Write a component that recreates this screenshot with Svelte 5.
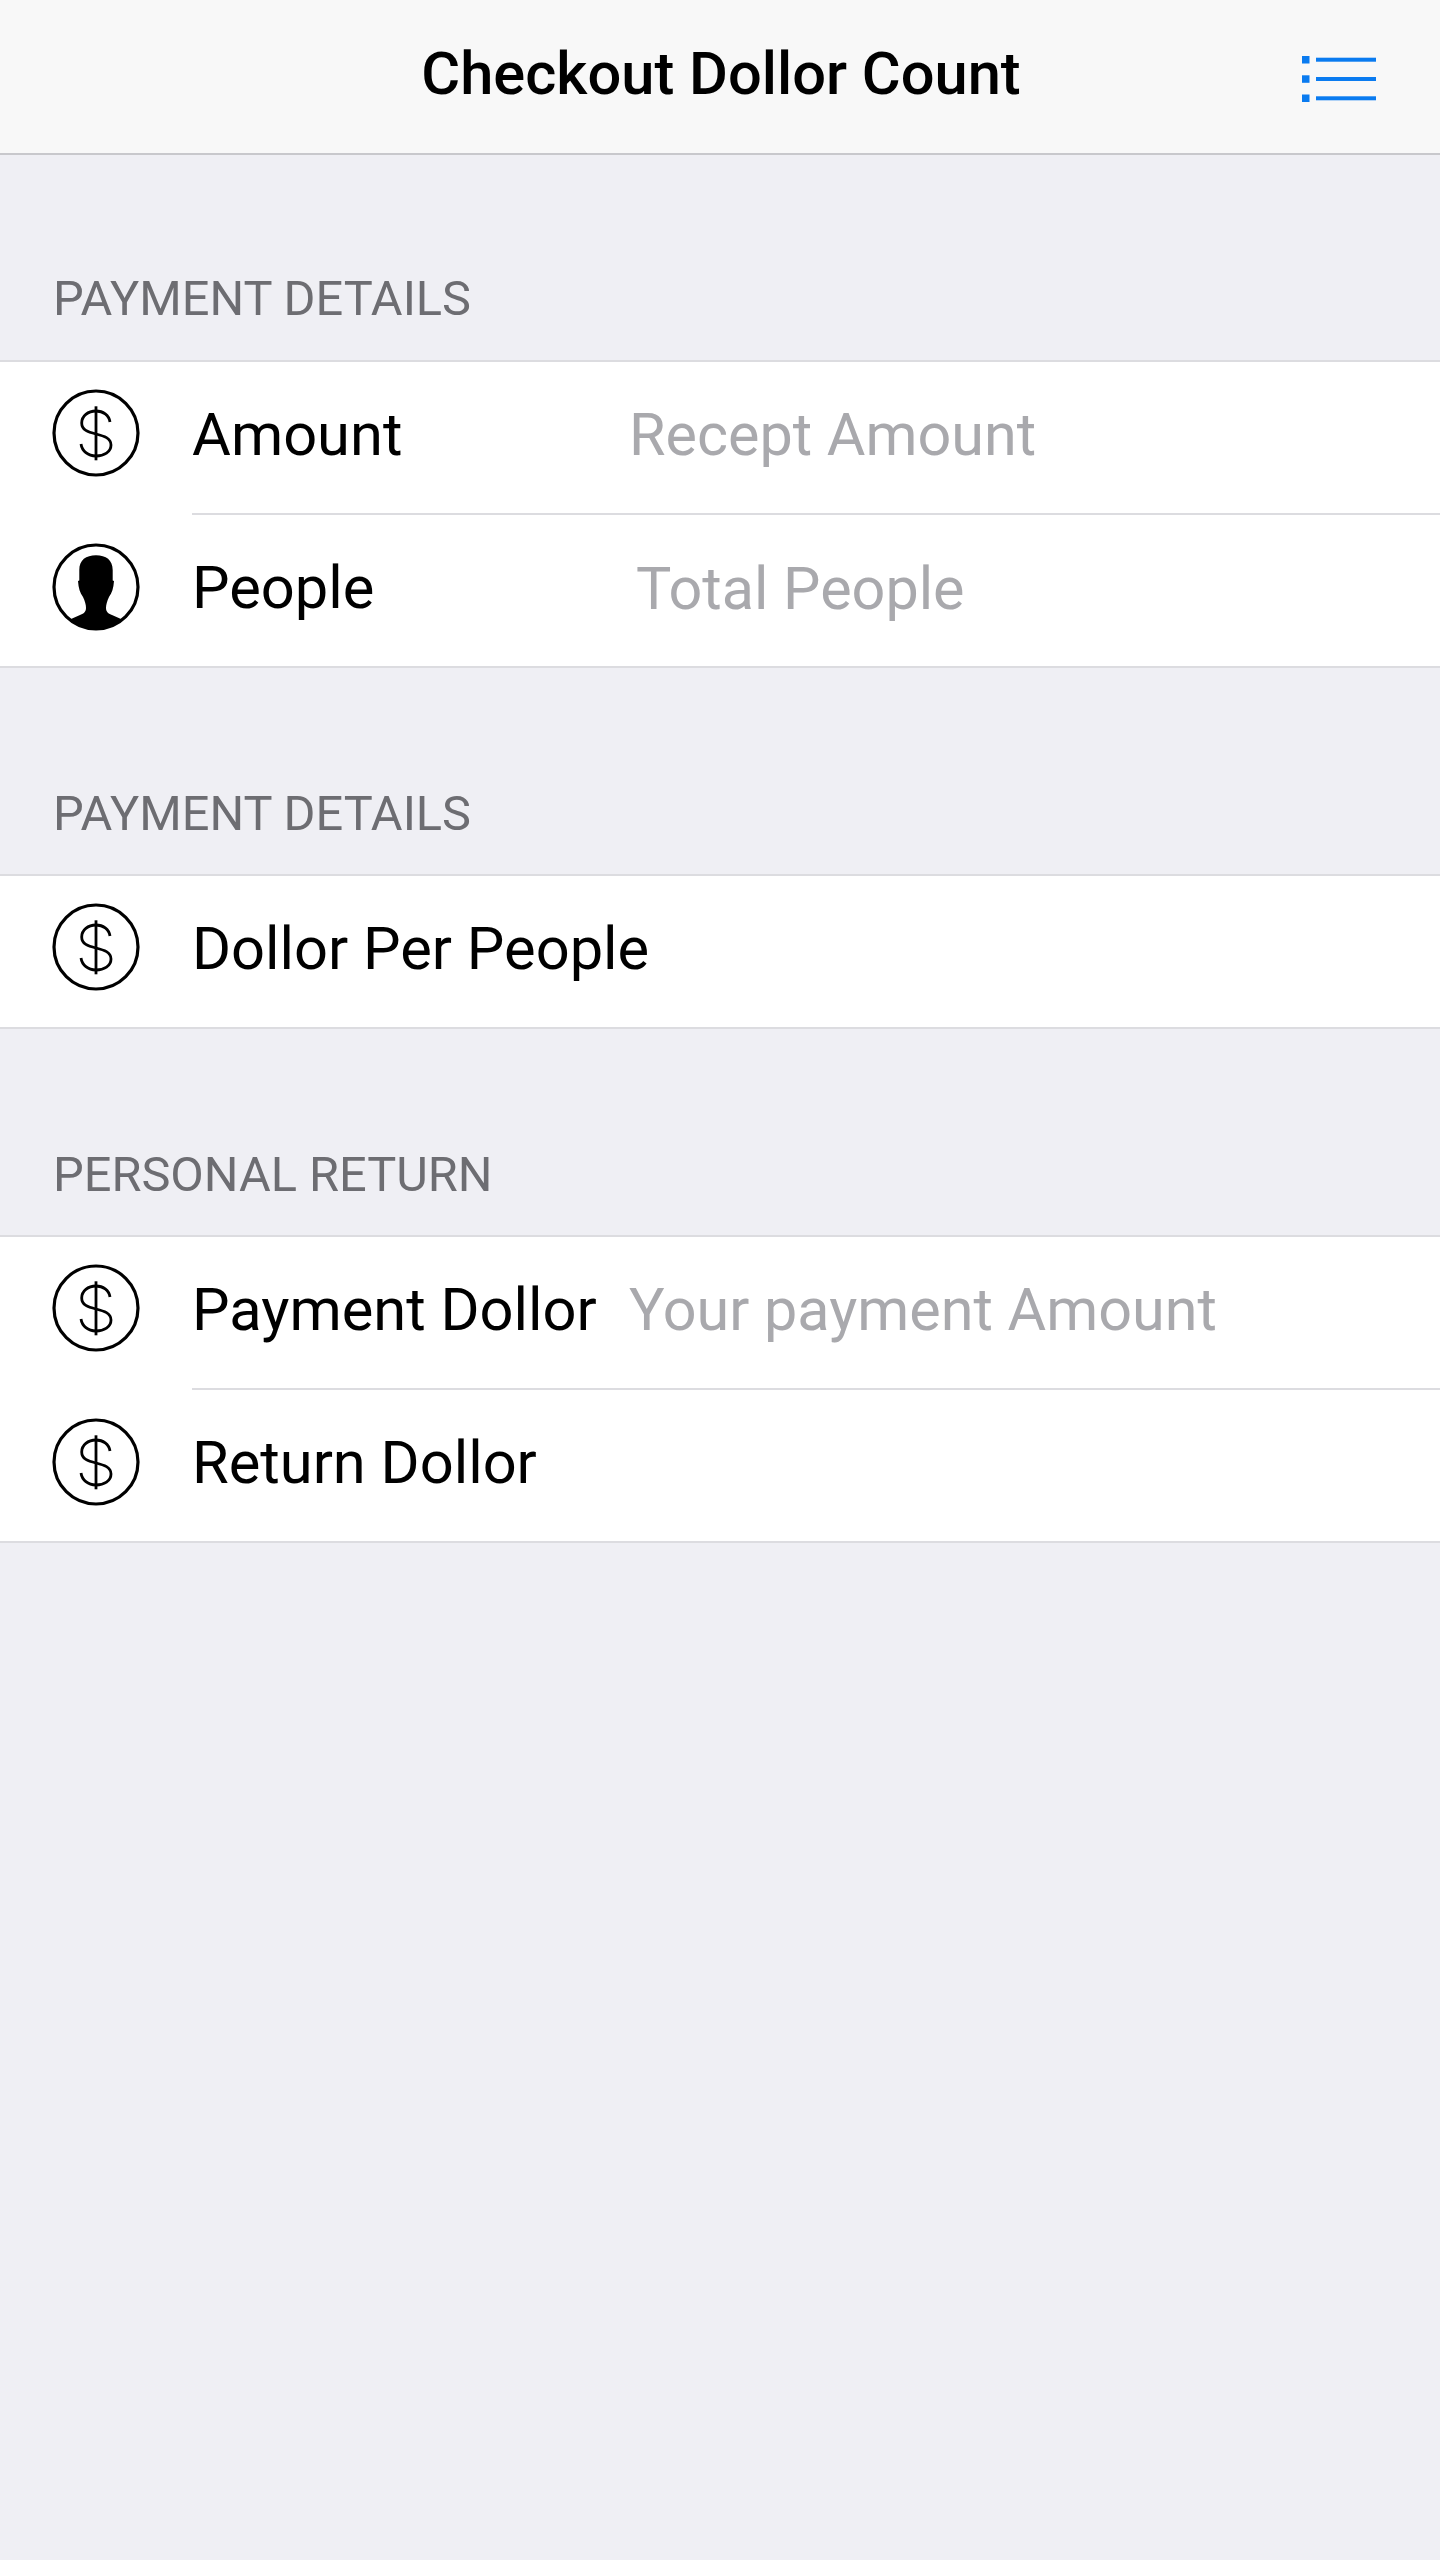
<script>
  const sections = [
    {
      title: 'PAYMENT DETAILS',
      rows: [
        { icon: 'dollar', label: 'Amount', placeholder: 'Recept Amount' },
        { icon: 'person', label: 'People', placeholder: 'Total People', nudge: true }
      ]
    },
    {
      title: 'PAYMENT DETAILS',
      rows: [{ icon: 'dollar', label: 'Dollor Per People' }]
    },
    {
      title: 'PERSONAL RETURN',
      rows: [
        { icon: 'dollar', label: 'Payment Dollor', placeholder: 'Your payment Amount' },
        { icon: 'dollar', label: 'Return Dollor' }
      ]
    }
  ];
</script>

<div class="page">
  <header class="nav">
    <h1>Checkout Dollor Count</h1>
    <button class="menu" aria-label="Menu">
      <svg width="74" height="46" viewBox="0 0 74 46" fill="#0a7bf0">
        <rect x="0" y="0" width="7.5" height="7.5" />
        <rect x="0" y="19.3" width="7.5" height="7.5" />
        <rect x="0" y="38.5" width="7.5" height="7.5" />
        <rect x="14" y="1.7" width="60" height="4" />
        <rect x="14" y="21" width="60" height="4" />
        <rect x="14" y="40.3" width="60" height="4" />
      </svg>
    </button>
  </header>

  {#each sections as section}
    <section class="section">
      <h2>{section.title}</h2>
      <div class="group">
        {#each section.rows as row}
          <div class="row">
            <svg class="icon" width="88" height="88" viewBox="0 0 88 88">
              {#if row.icon === 'dollar'}
                <circle cx="44" cy="44" r="42" fill="none" stroke="#000" stroke-width="3.2" />
                <path d="M58 33C57 26 51 22 44 22C36 22 29.7 27 29.7 34C29.7 41 36 43 44 45C52 47 59 49 59 56C59 63 52 67 44 67C36 67 30 62 29 55" fill="none" stroke="#000" stroke-width="2.8" />
                <path d="M44 17.3V71.3" fill="none" stroke="#000" stroke-width="2.8" />
              {:else}
                <clipPath id="head-clip"><circle cx="44" cy="44" r="42" /></clipPath>
                <path clip-path="url(#head-clip)" d="M44 12.3C54 12.3 60.7 17 60.7 27L60.7 37.5L62 38C61.5 45 60 50 57 54C55 58 54 62 54 65C54 69 57 71 60 72L69 76L69 90L19 90L19 76L28 72C31 71 34 69 34 65C34 62 33 58 31 54C28 50 26.5 45 26 38L27.3 37.5L27.3 27C27.3 17 34 12.3 44 12.3Z" fill="#000" />
                <circle cx="44" cy="44" r="42" fill="none" stroke="#000" stroke-width="3.2" />
              {/if}
            </svg>
            <div class="content">
              <span class="label">{row.label}</span>
              {#if row.placeholder}
                <input class="field" class:nudge={row.nudge} placeholder={row.placeholder} />
              {/if}
            </div>
          </div>
        {/each}
      </div>
    </section>
  {/each}
</div>

<style>
  :global(body) {
    margin: 0;
    background: #efeff4;
  }

  .page {
    min-height: 2560px;
    background: #efeff4;
    font-family: Roboto, "Liberation Sans", sans-serif;
    color: #000;
  }

  .nav {
    position: relative;
    display: flex;
    align-items: center;
    justify-content: center;
    height: 153px;
    background: #f8f8f8;
    border-bottom: 2px solid #c8c8cc;
  }

  .nav h1 {
    margin: 0 0 6px 2px;
    font-size: 59.6px;
    font-weight: 500;
  }

  .menu {
    position: absolute;
    right: 64px;
    top: 56px;
    padding: 0;
    border: none;
    background: none;
    line-height: 0;
  }

  .section {
    padding-top: 114px;
  }

  .section + .section {
    padding-top: 116px;
  }

  .section h2 {
    margin: 0;
    padding: 0 0 30px 53px;
    font-size: 48.7px;
    line-height: 60px;
    font-weight: 400;
    color: #6d6d72;
  }

  .section:first-of-type h2 {
    padding-bottom: 31px;
  }

  .group {
    background: #fff;
    border-top: 2px solid #dcdce0;
    border-bottom: 2px solid #dcdce0;
  }

  .row {
    display: flex;
    align-items: center;
    height: 151px;
    padding-left: 52px;
  }

  .row + .row {
    height: 153px;
  }

  .icon {
    flex: none;
    margin: 0 52px 10px 0;
  }

  .row + .row .icon {
    margin-bottom: 6px;
  }

  .content {
    flex: 1;
    display: flex;
    align-items: center;
    align-self: stretch;
    padding-bottom: 6px;
  }

  .row + .row .content {
    padding-bottom: 5px;
    border-top: 2px solid #dcdce0;
  }

  .label {
    flex: none;
    width: 437px;
    font-size: 59.6px;
    white-space: nowrap;
  }

  .field {
    flex: 1;
    min-width: 0;
    padding: 0;
    border: none;
    outline: none;
    background: none;
    font: inherit;
    font-size: 59.3px;
  }

  .field::placeholder {
    color: #a9a9ad;
    opacity: 1;
  }

  .nudge {
    margin-left: 7px;
  }
</style>
